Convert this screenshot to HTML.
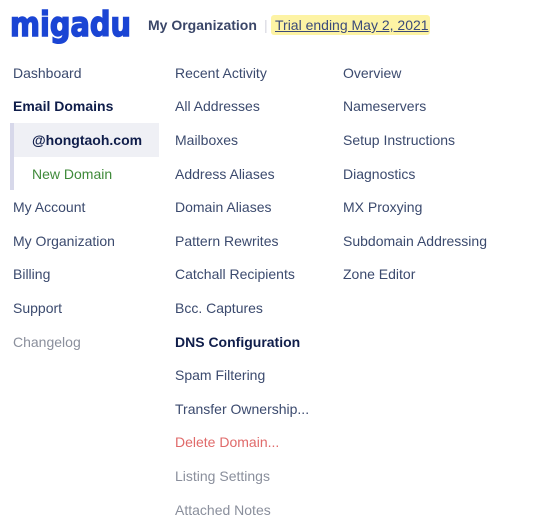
<!DOCTYPE html>
<html><head><meta charset="utf-8"><style>
body{margin:0;background:#fff;width:555px;height:531px;overflow:hidden;font-family:"Liberation Sans",Arial,sans-serif;font-size:14px;position:relative}
.a{position:absolute;white-space:nowrap;line-height:16px}
.n{color:#3b4a6e}
.b{font-weight:bold;color:#0f1d4a}
.g{color:#8a8f9c}
</style></head><body>
<svg class="a" style="left:8px;top:2px" width="130" height="44"><text x="2" y="34" textLength="121" lengthAdjust="spacingAndGlyphs" font-family="DejaVu Sans" font-weight="bold" font-size="34" stroke="#1b45d4" stroke-width="1.5" fill="#1b45d4">migadu</text></svg>
<div class="a" style="left:148px;top:17px;font-weight:bold;color:#3a4668;font-size:14px">My Organization</div>
<div class="a" style="left:264px;top:17px;color:#d6d6e0">|</div>
<div class="a" style="left:271px;top:15px;width:159px;height:20px;background:#fdf3a4;border-radius:3px"></div>
<div class="a" style="left:275px;top:17px;color:#3b4a7a;text-decoration:underline;font-size:14px">Trial ending May 2, 2021</div>

<div class="a" style="left:10px;top:123px;width:4px;height:67px;background:#d7d8ea"></div>
<div class="a" style="left:14px;top:123px;width:145px;height:34px;background:#eff0f5"></div>

<div class="a n" style="left:13px;top:65px">Dashboard</div>
<div class="a b" style="left:13px;top:98px">Email Domains</div>
<div class="a b" style="left:32px;top:132px">@hongtaoh.com</div>
<div class="a" style="left:32px;top:166px;color:#3f8a3a">New Domain</div>
<div class="a n" style="left:13px;top:199px">My Account</div>
<div class="a n" style="left:13px;top:233px">My Organization</div>
<div class="a n" style="left:13px;top:266px">Billing</div>
<div class="a n" style="left:13px;top:300px">Support</div>
<div class="a g" style="left:13px;top:334px">Changelog</div>

<div class="a n" style="left:175px;top:65px">Recent Activity</div>
<div class="a n" style="left:175px;top:98px">All Addresses</div>
<div class="a n" style="left:175px;top:132px">Mailboxes</div>
<div class="a n" style="left:175px;top:166px">Address Aliases</div>
<div class="a n" style="left:175px;top:199px">Domain Aliases</div>
<div class="a n" style="left:175px;top:233px">Pattern Rewrites</div>
<div class="a n" style="left:175px;top:266px">Catchall Recipients</div>
<div class="a n" style="left:175px;top:300px">Bcc. Captures</div>
<div class="a b" style="left:175px;top:334px">DNS Configuration</div>
<div class="a n" style="left:175px;top:367px">Spam Filtering</div>
<div class="a n" style="left:175px;top:401px">Transfer Ownership...</div>
<div class="a" style="left:175px;top:434px;color:#e06a6a">Delete Domain...</div>
<div class="a g" style="left:175px;top:468px">Listing Settings</div>
<div class="a g" style="left:175px;top:502px">Attached Notes</div>

<div class="a n" style="left:343px;top:65px">Overview</div>
<div class="a n" style="left:343px;top:98px">Nameservers</div>
<div class="a n" style="left:343px;top:132px">Setup Instructions</div>
<div class="a n" style="left:343px;top:166px">Diagnostics</div>
<div class="a n" style="left:343px;top:199px">MX Proxying</div>
<div class="a n" style="left:343px;top:233px">Subdomain Addressing</div>
<div class="a n" style="left:343px;top:266px">Zone Editor</div>
</body></html>
